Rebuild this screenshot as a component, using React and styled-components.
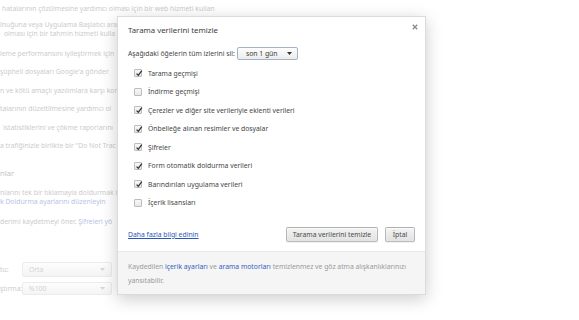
import React from "react";
import styled, { createGlobalStyle } from "styled-components";

const GlobalStyle = createGlobalStyle`
  html, body { margin: 0; padding: 0; background: #fff; }
  body { font-family: "Noto Sans", "Open Sans", sans-serif; }
`;

const Page = styled.div`
  position: relative;
  width: 579px;
  height: 320px;
  overflow: hidden;
  background: #fff;
`;

const Backdrop = styled.div`
  display: flex;
  flex-direction: column;
  padding-top: 3.5px;
  color: #cbcbcb;
  font-size: 6.8px;
  line-height: 9px;
  white-space: nowrap;
`;

const BgItem = styled.div`
  margin-top: ${(p) => (p.$mt ?? 9.5)}px;
  padding-left: ${(p) => p.$indent || 0}px;
`;

const BgHeading = styled.div`
  margin-top: ${(p) => p.$mt}px;
  font-size: 7.6px;
  color: #c4c4c4;
`;

const BgLink = styled.span`
  color: #b5c4e6;
`;

const BgSelectRow = styled.div`
  display: flex;
  align-items: center;
  height: ${(p) => p.$h}px;
  margin-top: ${(p) => p.$mt}px;
`;

const BgLabel = styled.div`
  width: 22px;
`;

const BgSelect = styled.div`
  box-sizing: border-box;
  width: 90px;
  height: 100%;
  display: flex;
  align-items: center;
  justify-content: space-between;
  padding: 0 6px;
  border: 1px solid #ececec;
  border-radius: 2px;
  background: linear-gradient(#fdfdfd, #f4f4f4);
  color: #d2d2d2;
`;

const Dialog = styled.div`
  position: absolute;
  left: 117px;
  top: 16px;
  width: 309px;
  height: 279px;
  box-sizing: border-box;
  display: flex;
  flex-direction: column;
  background: #fff;
  border: 1px solid rgba(0, 0, 0, 0.14);
  box-shadow: 0 4px 16px rgba(0, 0, 0, 0.2);
  color: #454545;
  font-size: 6.8px;
`;

const Header = styled.div`
  padding: 8px 10px 0;
  height: 10px;
  line-height: 10px;
  font-size: 7.8px;
  color: #3c3c3c;
`;

const Close = styled.div`
  position: absolute;
  right: 7px;
  top: 7px;
  width: 6px;
  height: 6px;
  display: flex;
`;

const PromptRow = styled.div`
  display: flex;
  align-items: center;
  margin-top: 12px;
  height: 13px;
  padding-left: 10px;
`;

const Select = styled.div`
  box-sizing: border-box;
  margin-left: 2px;
  width: 61px;
  height: 13px;
  display: flex;
  align-items: center;
  justify-content: space-between;
  padding: 0 5px 0 8px;
  border: 1px solid #a3b3ca;
  border-radius: 2px;
  background: linear-gradient(#fefefe, #ececec);
  color: #3a3a3a;
`;

const CheckList = styled.div`
  margin-top: 3.75px;
  padding-left: 16px;
  display: flex;
  flex-direction: column;
`;

const CheckRow = styled.div`
  display: flex;
  align-items: center;
  gap: 6px;
  height: 18.5px;
`;

const Box = styled.div`
  position: relative;
  box-sizing: border-box;
  width: 8px;
  height: 8px;
  border: 1px solid #bcbcbc;
  border-radius: 1px;
  background: linear-gradient(#f8f8f8, #e8e8e8);
  svg { position: absolute; left: 0; top: -1px; }
`;

const Actions = styled.div`
  margin-top: 15.25px;
  height: 15px;
  display: flex;
  align-items: center;
  gap: 7px;
  padding: 0 10px;
`;

const Link = styled.a`
  flex: 1;
  color: #2a56b8;
  text-decoration: underline;
  cursor: pointer;
`;

const Button = styled.button`
  box-sizing: border-box;
  width: ${(p) => p.$w}px;
  height: 15px;
  padding: 0;
  font-family: inherit;
  font-size: 6.8px;
  color: #4a4a4a;
  border: 1px solid rgba(0, 0, 0, 0.22);
  border-radius: 2px;
  background: linear-gradient(#f3f3f3, #e2e2e2);
  box-shadow: 0 1px 0 rgba(0, 0, 0, 0.06), inset 0 1px 2px rgba(255, 255, 255, 0.75);
`;

const Footer = styled.div`
  margin-top: auto;
  box-sizing: border-box;
  height: 43px;
  padding: 8px 10px 0;
  line-height: 14px;
  background: #f5f5f5;
  border-top: 1px solid #e8e8e8;
  color: #9a9a9a;
  white-space: nowrap;
`;

const FooterLink = styled.span`
  color: #3560bd;
`;

const Check = () => (
  <svg width="9" height="9" viewBox="0 0 9 9">
    <path d="M1.6 4.6 L3.3 6.3 L6.8 1.6" fill="none" stroke="#333" strokeWidth="1.3" />
  </svg>
);

const Arrow = ({ color = "#333" }) => (
  <svg width="5" height="3" viewBox="0 0 5 3">
    <path d="M0 0 H5 L2.5 3 Z" fill={color} />
  </svg>
);

const items = [
  ["Tarama geçmişi", true],
  ["İndirme geçmişi", false],
  ["Çerezler ve diğer site verileriyle eklenti verileri", true],
  ["Önbelleğe alınan resimler ve dosyalar", true],
  ["Şifreler", true],
  ["Form otomatik doldurma verileri", true],
  ["Barındırılan uygulama verileri", true],
  ["İçerik lisansları", false],
];

export default function App() {
  return (
    <Page>
      <GlobalStyle />
      <Backdrop>
        <BgItem $mt={0} $indent={2}>hatalarının çözülmesine yardımcı olması için bir web hizmeti kullan</BgItem>
        <BgItem $mt={7}>lnuğuna veya Uygulama Başlatıcı ara</BgItem>
        <BgItem $mt={0} $indent={4}>olması için bir tahmin hizmeti kulla</BgItem>
        <BgItem $mt={11}>leme performansını iyileştirmek için</BgItem>
        <BgItem>şüpheli dosyaları Google'a gönder</BgItem>
        <BgItem>n ve kötü amaçlı yazılımlara karşı kor</BgItem>
        <BgItem>talarının düzeltilmesine yardımcı ol</BgItem>
        <BgItem $indent={3}>istatistiklerini ve çökme raporlarını</BgItem>
        <BgItem>a trafiğinizle birlikte bir "Do Not Trac</BgItem>
        <BgHeading $mt={19}>nlar</BgHeading>
        <BgItem $mt={10}>nlarını tek bir tıklamayla doldurmak i</BgItem>
        <BgItem $mt={0}>
          <BgLink>k Doldurma ayarlarını düzenleyin</BgLink>
        </BgItem>
        <BgItem $mt={11}>
          derimi kaydetmeyi öner. <BgLink>Şifreleri yö</BgLink>
        </BgItem>
        <BgSelectRow $h={15} $mt={35.5}>
          <BgLabel>tu:</BgLabel>
          <BgSelect>
            Orta <Arrow color="#d6d6d6" />
          </BgSelect>
        </BgSelectRow>
        <BgSelectRow $h={13} $mt={5}>
          <BgLabel>ştırma:</BgLabel>
          <BgSelect>
            %100 <Arrow color="#d6d6d6" />
          </BgSelect>
        </BgSelectRow>
      </Backdrop>

      <Dialog>
        <Header>Tarama verilerini temizle</Header>
        <Close>
          <svg width="6" height="6" viewBox="0 0 6 6">
            <path d="M0.8 0.8 L5.2 5.2 M5.2 0.8 L0.8 5.2" stroke="#8a8a8a" strokeWidth="1.3" />
          </svg>
        </Close>
        <PromptRow>
          Aşağıdaki öğelerin tüm izlerini sil:
          <Select>
            son 1 gün <Arrow />
          </Select>
        </PromptRow>
        <CheckList>
          {items.map(([label, checked]) => (
            <CheckRow key={label}>
              <Box>{checked && <Check />}</Box>
              {label}
            </CheckRow>
          ))}
        </CheckList>
        <Actions>
          <Link>Daha fazla bilgi edinin</Link>
          <Button $w={92}>Tarama verilerini temizle</Button>
          <Button $w={30}>İptal</Button>
        </Actions>
        <Footer>
          Kaydedilen <FooterLink>içerik ayarları</FooterLink> ve <FooterLink>arama motorları</FooterLink> temizlenmez ve göz atma alışkanlıklarınızı
          <br />
          yansıtabilir.
        </Footer>
      </Dialog>
    </Page>
  );
}
